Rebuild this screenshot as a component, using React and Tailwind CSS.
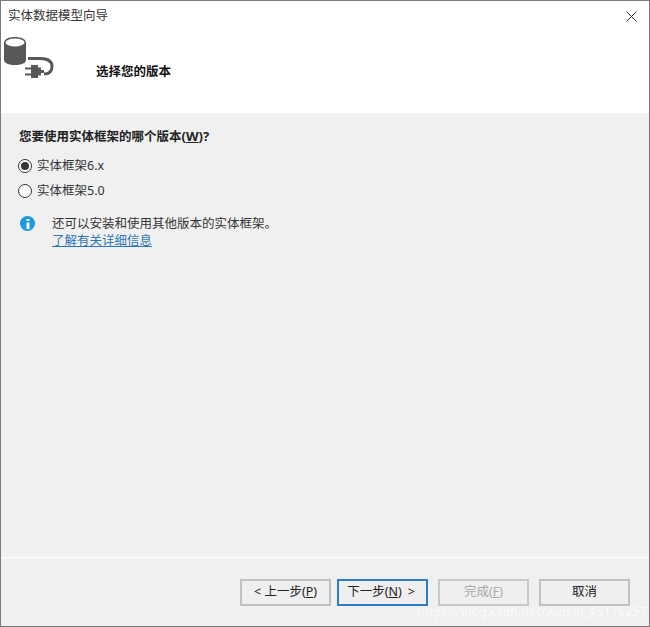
// App.jsx
const font = { fontFamily: '"Noto Sans", "Noto Sans CJK SC", sans-serif' };

function WizardIcon() {
  return (
    <svg width="54" height="44" viewBox="0 0 54 44" className="block mt-[3px]">
      <path d="M2 9c0-4 5-6 11-6s11 2 11 6v17c0 3.500-5 5-11 5S2 29.500 2 26z" fill="#58585a" />
      <ellipse cx="13" cy="8.500" rx="9.500" ry="4" fill="#fff" />
      <path d="M26 24.500h12c7 0 12 2.500 12 8 0 5-3 7.500-8 7.500" fill="none" stroke="#58585a" strokeWidth="3" />
      <path d="M29 31h7v13h-7z" fill="#58585a" />
      <path d="M36 33.500h3v8h-3zM39 36h3v3h-3z" fill="#58585a" />
      <path d="M23 33.500h6v2h-6zM23 39.500h6v2h-6z" fill="#58585a" />
    </svg>
  );
}

function Radio({ checked, children }) {
  return (
    <div className="flex items-center h-[18px]">
      <span className="w-[14px] h-[14px] rounded-full border border-[#333] bg-white flex items-center justify-center">
        {checked && <span className="w-[8px] h-[8px] rounded-full bg-[#333]" />}
      </span>
      <span className="ml-[5px] text-[12.500px] text-[#333]">{children}</span>
    </div>
  );
}

function Button({ children, primary, disabled }) {
  return (
    <div
      className={`w-[91px] h-[27px] flex items-center justify-center text-[12.500px] bg-[#efefef] border-2 ${
        primary ? "border-[#2b7fc7]" : disabled ? "border-[#c8c8c8] text-[#a8a8a8]" : "border-[#c0c0c0]"
      } ${disabled ? "" : "text-[#222]"}`}
    >
      {children}
    </div>
  );
}

export default function App() {
  return (
    <div style={font} className="relative w-[650px] h-[627px] flex flex-col border border-[#7a7a7a] bg-[#f0f0f0] overflow-hidden">
      <div className="bg-white h-[112px] shrink-0">
        <div className="flex items-center justify-between h-[30px] pl-[7px] pr-[12px]">
          <span className="text-[12.500px] text-[#333]">实体数据模型向导</span>
          <svg width="11" height="11" viewBox="0 0 11 11">
            <path d="M.5.5l10 10M10.500.5l-10 10" stroke="#333" strokeWidth="1" fill="none" />
          </svg>
        </div>
        <div className="flex items-start pl-px">
          <WizardIcon />
          <span className="ml-[40px] mt-[32px] text-[12.500px] font-bold text-[#111]">选择您的版本</span>
        </div>
      </div>

      <div className="flex-1 pl-[18px] pt-[14px]">
        <div className="text-[12.500px] font-bold text-[#222] h-[18px] leading-[18px]">
          您要使用实体框架的哪个版本<span className="text-[13px]">(<span className="underline">W</span>)?</span>
        </div>
        <div className="mt-[12px] -ml-px flex flex-col gap-[7px]">
          <Radio checked>实体框架6.x</Radio>
          <Radio>实体框架5.0</Radio>
        </div>
        <div className="mt-[15px] ml-px flex items-start">
          <span className="w-[15px] h-[15px] mt-[1px] rounded-full bg-[#1a9ae0] flex items-center justify-center">
            <svg width="4" height="10" viewBox="0 0 4 10">
              <path d="M.5 0h3v2h-3zM.5 3.500h3V10h-3z" fill="#fff" />
            </svg>
          </span>
          <div className="ml-[17px] text-[12.500px] leading-[17px] text-[#333]">
            <div>还可以安装和使用其他版本的实体框架。</div>
            <div className="text-[#2a76b8] underline">了解有关详细信息</div>
          </div>
        </div>
      </div>

      <div className="h-[69px] shrink-0 border-t border-white flex justify-end items-start pt-[21px] pr-[19px]">
        <Button>&lt; 上一步(<span className="underline">P</span>)</Button>
        <div className="ml-[6px]">
          <Button primary>
            <span className="-ml-[3px]">下一步(<span className="underline">N</span>)</span>
            <span className="ml-[6px]">&gt;</span>
          </Button>
        </div>
        <div className="ml-[10px]"><Button disabled>完成(<span className="underline">F</span>)</Button></div>
        <div className="ml-[10px]"><Button>取消</Button></div>
      </div>

      <div className="absolute left-[416px] top-[602px] text-[12px] tracking-[.3px] text-white/70">
        https://blog.csdn.net/weixin_45176257
      </div>
    </div>
  );
}
